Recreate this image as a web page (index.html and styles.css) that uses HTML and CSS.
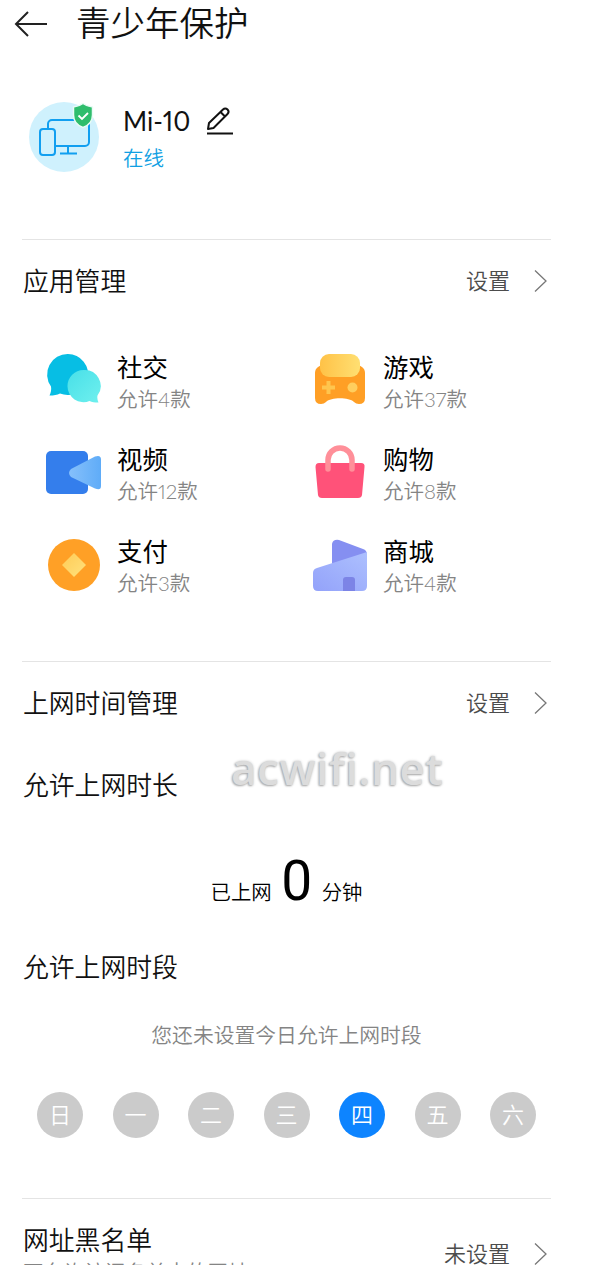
FILE: index.html
```
<!DOCTYPE html>
<html lang="zh-CN">
<head>
    <meta charset="UTF-8">
    <meta name="viewport" content="width=device-width, initial-scale=1.0">
    <title>青少年保护</title>
    <link rel="stylesheet" href="styles.css">
</head>
<body>
    <div class="screen">
        <header class="topbar">
            <svg class="back" width="34" height="28" viewBox="0 0 34 28" fill="none" stroke="#222" stroke-width="2">
                <path d="M33 14H2M14 2L2 14l12 12"/>
            </svg>
            <h1>青少年保护</h1>
        </header>

        <div class="device">
            <svg class="avatar" width="72" height="72" viewBox="0 0 72 72" fill="none">
                <circle cx="36" cy="36" r="35" fill="#cff1fd"/>
                <g stroke="#119ff0" stroke-width="2">
                    <path d="M20 28v-5a4 4 0 0 1 4-4h33a4 4 0 0 1 4 4v18a4 4 0 0 1-4 4H28M40 46v6M32 52.500h17"/>
                    <rect x="12" y="28" width="15" height="26" rx="3"/>
                </g>
                <path d="M55 2.500q4 3 9.500 3.500V14c0 7-4 10.500-9.500 12.500-5.500-2-9.500-5.500-9.500-12.500V6q5.500-.5 9.500-3.500z" fill="#2fbd6c" stroke="#e9fbf6" stroke-width="1.500" stroke-linejoin="round"/>
                <path d="M50.500 14.500l3.500 3.500 6-6" stroke="#fff" stroke-width="1.800"/>
            </svg>
            <div class="device-info">
                <div class="device-name">
                    <span>Mi-10</span>
                    <svg width="28" height="28" viewBox="0 0 28 28" fill="none" stroke="#111" stroke-width="2" stroke-linejoin="round">
                        <path d="M2 22l1-6L17 2.500c1.500-1.500 3-1.500 4.500 0s1.500 3 0 4.500L7.500 21zM14.500 5l4.500 4.500M1 26.500h26"/>
                    </svg>
                </div>
                <div class="status">在线</div>
            </div>
        </div>

        <section class="apps">
            <div class="section-head">
                <h2>应用管理</h2>
                <a class="more">设置
                    <svg width="13" height="22" viewBox="0 0 13 22" fill="none" stroke="#777" stroke-width="1.300"><path d="M1 .5L12 11 1 21.500"/></svg>
                </a>
            </div>
            <div class="app-grid">
                <div class="app">
                    <svg width="60" height="60" viewBox="0 0 60 60">
                        <defs><linearGradient id="chat" x1="0" y1="0" x2="1" y2="1"><stop offset="0" stop-color="#48dfe8"/><stop offset="1" stop-color="#6ff0ee"/></linearGradient></defs>
                        <path d="M26 5a20.500 20.500 0 1 1-8 39.500c-3 1.500-6 2-10.500 2 1.500-3 2-6 1.500-9A20.500 20.500 0 0 1 26 5z" fill="#07bee4"/>
                        <path d="M41.500 21A16 16 0 0 0 25.500 37a16 16 0 0 0 22 15c2.500 1 5 1.500 9 1.500-1-2.500-1.500-4.500-1-7A16 16 0 0 0 41.500 21z" fill="url(#chat)"/>
                    </svg>
                    <div><h3>社交</h3><p>允许4款</p></div>
                </div>
                <div class="app">
                    <svg width="60" height="60" viewBox="0 0 60 60">
                        <defs>
                            <linearGradient id="pad" x1="0" y1="0" x2="1" y2="0"><stop offset="0" stop-color="#ffc247"/><stop offset="1" stop-color="#ffdf72"/></linearGradient>
                        </defs>
                        <path d="M8 18l5-3h34l5 3q3 2 3 6v25q0 6-6 6-3 0-5-2c-5-5-23-5-28 0q-2 2-5 2-6 0-6-6V24q0-4 3-6z" fill="#ff9f25"/>
                        <rect x="10" y="5" width="40" height="23" rx="9" fill="url(#pad)"/>
                        <path d="M18.500 32v13M12 38.500h13" stroke="#ffc54e" stroke-width="4"/>
                        <circle cx="42.500" cy="38.500" r="5" fill="#ffce5e"/>
                    </svg>
                    <div><h3>游戏</h3><p>允许37款</p></div>
                </div>
                <div class="app">
                    <svg width="60" height="60" viewBox="0 0 60 60">
                        <defs><linearGradient id="lens" x1="0" y1="0" x2="1" y2="0"><stop offset="0" stop-color="#86c0fb"/><stop offset="1" stop-color="#5facf8"/></linearGradient></defs>
                        <rect x="4" y="10" width="42" height="43" rx="5" fill="#347eec"/>
                        <path d="M29 28l24-12.500q6-2 6 3V45q0 5-6 2.500L29 36q-4-4 0-8z" fill="url(#lens)"/>
                    </svg>
                    <div><h3>视频</h3><p>允许12款</p></div>
                </div>
                <div class="app">
                    <svg width="60" height="60" viewBox="0 0 60 60">
                        <path d="M9 22h42q4 0 3.500 4L52 54q-.5 3-4 3H12q-3.500 0-4-3L5.500 26q0-4 3.500-4z" fill="#ff5279"/>
                        <path d="M18 28V19a12 12 0 0 1 24 0v9" fill="none" stroke="#ff8f99" stroke-width="5.500" stroke-linecap="round"/>
                    </svg>
                    <div><h3>购物</h3><p>允许8款</p></div>
                </div>
                <div class="app">
                    <svg width="60" height="60" viewBox="0 0 60 60">
                        <defs><linearGradient id="coin" x1="0" y1="0" x2="1" y2="1"><stop offset="0" stop-color="#ffcb55"/><stop offset="1" stop-color="#ffe27e"/></linearGradient></defs>
                        <circle cx="32" cy="32" r="26" fill="#ffa026"/>
                        <path d="M32 20l12 12-12 12-12-12z" fill="url(#coin)"/>
                    </svg>
                    <div><h3>支付</h3><p>允许3款</p></div>
                </div>
                <div class="app">
                    <svg width="60" height="60" viewBox="0 0 60 60">
                        <defs><linearGradient id="mall" x1="0" y1="1" x2="1" y2="0"><stop offset="0" stop-color="#93a2fa"/><stop offset="1" stop-color="#adc0fe"/></linearGradient></defs>
                        <path d="M22 35V11q1-5 7-4l24 9q4 1 4 6v14z" fill="#858ff1"/>
                        <path d="M7 35l50-16v34q0 5-5 5H8q-5 0-5-5V40q0-4 4-5z" fill="url(#mall)"/>
                        <path d="M33 58V47q0-3 3-3h6q3 0 3 3v11z" fill="#7c84e6"/>
                    </svg>
                    <div><h3>商城</h3><p>允许4款</p></div>
                </div>
            </div>
        </section>

        <section class="time">
            <div class="section-head">
                <h2>上网时间管理</h2>
                <a class="more">设置
                    <svg width="13" height="22" viewBox="0 0 13 22" fill="none" stroke="#777" stroke-width="1.300"><path d="M1 .5L12 11 1 21.500"/></svg>
                </a>
            </div>
            <h2 class="duration-title">允许上网时长</h2>
            <div class="duration">
                <span>已上网</span><strong>0</strong><span>分钟</span>
            </div>
            <h2 class="period-title">允许上网时段</h2>
            <p class="hint">您还未设置今日允许上网时段</p>
            <div class="days">
                <span>日</span>
                <span>一</span>
                <span>二</span>
                <span>三</span>
                <span class="active">四</span>
                <span>五</span>
                <span>六</span>
            </div>
        </section>

        <section class="blacklist">
            <div class="blacklist-text">
                <h2>网址黑名单</h2>
                <p>不允许访问名单中的网址</p>
            </div>
            <a class="more">未设置
                <svg width="13" height="22" viewBox="0 0 13 22" fill="none" stroke="#777" stroke-width="1.300"><path d="M1 .5L12 11 1 21.500"/></svg>
            </a>
        </section>

        <div class="watermark">acwifi.net</div>
    </div>
</body>
</html>
```
FILE: styles.css
```
* {
    box-sizing: border-box;
}

body {
    margin: 0;
    background-color: #fff;
    color: #111;
    font-family: Lato, "Noto Sans CJK SC", sans-serif;
    font-weight: 350;
    font-variant-numeric: proportional-nums;
}

h1, h2, h3, p {
    margin: 0;
    font-weight: 350;
}

svg {
    display: block;
    flex-shrink: 0;
}

.screen {
    position: relative;
    width: 600px;
    height: 1265px;
    padding: 0 49px 0 22px;
    overflow: hidden;
}

.topbar {
    display: flex;
    align-items: center;
    height: 48px;
    margin-left: -8px;
}

h1 {
    margin-left: 28px;
    padding-bottom: 2px;
    font-size: 34.5px;
    line-height: 46px;
}

.device {
    display: flex;
    height: 191px;
    padding: 53px 0 0 6px;
}

.device-info {
    margin-left: 23px;
}

.device-name {
    display: flex;
    gap: 16px;
    height: 40px;
    align-items: center;
    font-size: 26px;
    font-weight: 400;
}

.status {
    font-size: 20.5px;
    line-height: 34px;
    color: #109fe3;
}

section {
    border-top: 1px solid #e4e4e4;
}

.section-head {
    display: flex;
    justify-content: space-between;
    align-items: center;
    height: 82px;
    padding-right: 4px;
}

h2 {
    padding-left: 1px;
    font-size: 25.8px;
    line-height: 36px;
}

.more {
    display: flex;
    align-items: center;
    gap: 24px;
    font-size: 22px;
    line-height: 32px;
    color: #4c4c4c;
}

.apps {
    height: 422px;
}

.app-grid {
    display: grid;
    grid-template-columns: 266px 1fr;
    grid-auto-rows: 92px;
    padding: 27px 0 0 20px;
}

.app {
    display: flex;
    gap: 15px;
}

.app:nth-child(even) svg {
    margin: 0 -2px 0 2px;
}

.app h3 {
    font-size: 25.4px;
    font-weight: 400;
    line-height: 36px;
    color: #000;
}

.app p {
    font-size: 20.5px;
    line-height: 28px;
    color: #848484;
}

.time {
    height: 537px;
}

.duration-title {
    margin-top: 23px;
}

.duration {
    display: flex;
    justify-content: center;
    align-items: baseline;
    height: 78px;
    margin-top: 39px;
    font-size: 20.4px;
    line-height: 78px;
    color: #000;
}

.duration strong {
    margin: 0 9px;
    font-family: Roboto, sans-serif;
    font-size: 55px;
    font-weight: 400;
}

.period-title {
    margin-top: 29px;
}

.hint {
    margin-top: 34px;
    font-size: 20.8px;
    line-height: 32px;
    text-align: center;
    color: #848484;
}

.days {
    display: flex;
    justify-content: space-between;
    margin-top: 41px;
    padding: 0 15px;
}

.days span {
    width: 46px;
    height: 46px;
    border-radius: 50%;
    background-color: #cbcbcb;
    color: #fff;
    font-size: 22px;
    line-height: 46px;
    text-align: center;
}

.days .active {
    background-color: #0d84ff;
}

.blacklist {
    display: flex;
    justify-content: space-between;
    align-items: flex-start;
    padding: 23px 4px 0 0;
}

.blacklist-text p {
    padding-left: 1px;
    font-size: 20.5px;
    line-height: 28px;
    color: #848484;
}

.blacklist .more {
    margin-top: 16px;
}

/* sits over the page content */
.watermark {
    position: absolute;
    top: 741px;
    left: 231px;
    font-family: "Open Sans", sans-serif;
    font-size: 44px;
    font-weight: 600;
    letter-spacing: 0.6px;
    line-height: 54px;
    color: #dcdcdc;
    text-shadow: -1px 1px 2px #aaa, 0 0 3px #ccc;
}
```
